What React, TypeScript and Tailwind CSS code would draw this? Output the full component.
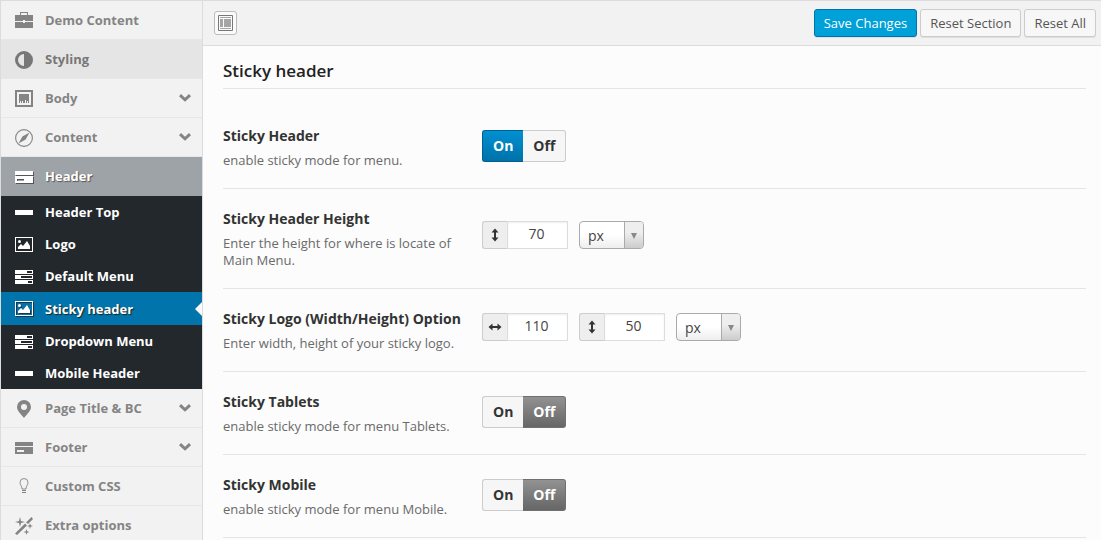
import { useId, useState } from "react";
import type { ReactNode } from "react";

type IconName =
  | "briefcase" | "adjust" | "photo" | "compass" | "card" | "minus"
  | "picture" | "tasks" | "pin" | "bulb" | "magic";

const shapes: Record<IconName, ReactNode> = {
  briefcase: (
    <>
      <path d="M5 3V0h8v3h5v6h-8V8H8v1H0V3zM6 3h6V1H6z" fillRule="evenodd" />
      <path d="M0 10h8v1h2v-1h8v6H0z" />
    </>
  ),
  adjust: <path d="M9 0a9 9 0 1 0 0 18A9 9 0 0 0 9 0zm0 3v12A6 6 0 0 1 9 3z" fillRule="evenodd" />,
  photo: (
    <>
      <path d="M0 0h18v17H0zM2 2v13h14V2z" fillRule="evenodd" />
      <path d="M4 4h10v9h-1v-2h-1v2h-1v-3h-1v3H8v-2H7v2H6v-2H5v2H4z" />
    </>
  ),
  compass: (
    <>
      <circle cx="9" cy="9" r="8.4" fill="none" stroke="currentColor" strokeWidth="1.1" />
      <path d="M14.5 3.5 10.6 10.6 3.5 14.5 7.4 7.4z" />
    </>
  ),
  card: (
    <>
      <path d="M0 3h18v4H0z" />
      <path d="M0 8h18v7H0zM2 11v2h7v-2z" fillRule="evenodd" />
    </>
  ),
  minus: <path d="M0 6h18v5H0z" />,
  picture: (
    <>
      <path d="M0 1h18v15H0zM1 2v13h16V2z" fillRule="evenodd" />
      <circle cx="4.5" cy="5.5" r="1.5" />
      <path d="M3 13v-2l3-3 2 2 4-5 3 5v3z" />
    </>
  ),
  tasks: (
    <path
      d="M0 2h18v4H0zM12 3v2h5V3zM0 7h18v4H0zM6 8v2h11V8zM0 12h18v4H0zM13 13v2h4v-2z"
      fillRule="evenodd"
    />
  ),
  pin: (
    <path
      d="M9 0a7 7 0 0 0-7 7c0 4 4 7 7 11 3-4 7-7 7-11a7 7 0 0 0-7-7zm0 4a3 3 0 1 1 0 6 3 3 0 0 1 0-6z"
      fillRule="evenodd"
    />
  ),
  bulb: (
    <>
      <path d="M7 11C7 8 5 7 5 4.500a4 4 0 0 1 8 0C13 7 11 8 11 11z" fill="none" stroke="currentColor" strokeWidth="0.9" />
      <path d="M7 12h4v1H7zM7 14h4v1H7z" />
    </>
  ),
  magic: (
    <>
      <path d="M0 16.500 10 6.500l2 2L2 18zM11 5.500 16.500 0 18 2l-5 5z" />
      <path d="M5 0 6 4l4 1-4 1-1 4-1-4-4-1 4-1zM15 6l.7 2.300L18 9l-2.300.7L15 12l-.7-2.300L12 9l2.300-.7zM11.500 12l.7 2.300 2.300.7-2.300.7-.7 2.300-.7-2.300L8.500 15l2.300-.7z" />
    </>
  ),
};

function Icon({ name }: { name: IconName }) {
  return (
    <svg viewBox="0 0 19 19" className="h-[19px] w-[19px] shrink-0" fill="currentColor" aria-hidden="true">
      {shapes[name]}
    </svg>
  );
}

function Chevron() {
  return (
    <svg viewBox="0 0 12 8" className="mr-px mb-0.5 ml-auto h-2 w-3" fill="none" stroke="currentColor" strokeWidth="3" aria-hidden="true">
      <path d="M1 1.200 6 5.800 11 1.200" />
    </svg>
  );
}

function NavItem({ icon, label, expandable = false, state = "idle" }: {
  icon: IconName;
  label: string;
  expandable?: boolean;
  state?: "idle" | "hover" | "active";
}) {
  const look = {
    idle: "border-[#e7e7e7] bg-[#f2f2f2] text-[#848484]",
    hover: "border-[#e7e7e7] bg-[#e5e5e5] text-[#777777]",
    active: "border-[#9ea3a8] bg-[#9ea3a8] text-white [text-shadow:1px_1px_1px_#555] [&_svg]:drop-shadow-[1px_1px_0_#555]",
  }[state];
  return (
    <a href="#" className={`flex h-[39px] items-center gap-[11px] border-b pt-0.5 pr-[10px] pl-[14px] ${look}`}>
      <Icon name={icon} />
      <span>{label}</span>
      {expandable && <Chevron />}
    </a>
  );
}

function SubItem({ icon, label, current = false }: { icon: IconName; label: string; current?: boolean }) {
  return (
    <a
      href="#"
      aria-current={current ? "page" : undefined}
      className={`relative flex items-center gap-[11px] pt-0.5 pl-[14px] text-white ${
        current
          ? "h-[33px] bg-[#0074ab] [text-shadow:1px_1px_1px_#222] [&_svg]:drop-shadow-[1px_1px_0_#234]"
          : "h-8"
      }`}
    >
      <Icon name={icon} />
      <span>{label}</span>
      {current && (
        <span className="absolute top-1/2 right-0 -translate-y-1/2 border-y-7 border-r-7 border-y-transparent border-r-[#fcfcfc]" />
      )}
    </a>
  );
}

function Sidebar() {
  return (
    <nav className="w-[203px] shrink-0 border-x border-[#dcdcdc] bg-[#f2f2f2] font-bold">
      <NavItem icon="briefcase" label="Demo Content" />
      <NavItem icon="adjust" label="Styling" state="hover" />
      <NavItem icon="photo" label="Body" expandable />
      <NavItem icon="compass" label="Content" expandable />
      <NavItem icon="card" label="Header" state="active" />
      <div className="bg-[#23282d]">
        <SubItem icon="minus" label="Header Top" />
        <SubItem icon="picture" label="Logo" />
        <SubItem icon="tasks" label="Default Menu" />
        <SubItem icon="picture" label="Sticky header" current />
        <SubItem icon="tasks" label="Dropdown Menu" />
        <SubItem icon="minus" label="Mobile Header" />
      </div>
      <NavItem icon="pin" label="Page Title & BC" expandable />
      <NavItem icon="card" label="Footer" expandable />
      <NavItem icon="bulb" label="Custom CSS" />
      <NavItem icon="magic" label="Extra options" />
    </nav>
  );
}

function Toggle({ label, initial }: { label: string; initial: boolean }) {
  const [on, setOn] = useState(initial);
  const idle = "border-[#cccccc] bg-[#f6f6f6] text-[#333333]";
  return (
    <div role="group" aria-label={label} className="mb-1 flex h-8 text-sm font-bold">
      <button
        type="button"
        aria-pressed={on}
        onClick={() => setOn(true)}
        className={`rounded-l-[3px] border border-r-0 px-[10px] ${
          on ? "border-[#00608f] bg-linear-to-b from-[#0090d3] to-[#0072a8] text-white" : idle
        }`}
      >
        On
      </button>
      <button
        type="button"
        aria-pressed={!on}
        onClick={() => setOn(false)}
        className={`rounded-r-[3px] border border-l-0 px-[10px] ${
          on ? idle : "border-[#707070] bg-linear-to-b from-[#929292] to-[#666666] text-white"
        }`}
      >
        Off
      </button>
    </div>
  );
}

function SizeInput({ label, value, vertical = false }: { label: string; value: string; vertical?: boolean }) {
  const id = useId();
  return (
    <div className="mb-2 flex h-7">
      <label
        htmlFor={id}
        aria-label={label}
        className="flex w-[25px] items-center justify-center rounded-l-[3px] border border-r-0 border-[#cccccc] bg-[#eeeeee] text-[#333333]"
      >
        <svg viewBox="0 0 14 14" className="h-[14px] w-[14px]" fill="currentColor" aria-hidden="true">
          <path
            d={vertical
              ? "M7 .5 10.500 4.500H8v5h2.500L7 13.500 3.500 9.500H6v-5H3.500z"
              : "M.5 7 4.500 3.500V6h5V3.500L13.500 7 9.500 10.500V8h-5v2.500z"}
          />
        </svg>
      </label>
      <input
        id={id}
        type="text"
        defaultValue={value}
        className="w-[61px] border border-[#dddddd] bg-white pr-0.5 pb-0.5 text-center text-sm text-[#444444] shadow-[inset_0_1px_2px_rgba(0,0,0,0.07)] outline-none"
      />
    </div>
  );
}

function UnitSelect({ label }: { label: string }) {
  return (
    <div className="relative mb-2 h-7 w-[65px]">
      <select
        aria-label={label}
        className="h-full w-full appearance-none rounded-[4px] border border-[#aaaaaa] bg-linear-to-t from-[#eeeeee] to-white to-50% pt-0.5 pl-2 text-sm text-[#444444] outline-none"
      >
        <option>px</option>
      </select>
      <span className="pointer-events-none absolute inset-y-px right-px flex w-[19px] items-center justify-center rounded-r-[3px] border-l border-[#aaaaaa] bg-linear-to-t from-[#cccccc] to-[#eeeeee] to-60%">
        <span className="mt-0.5 border-x-3 border-t-6 border-x-transparent border-t-[#888888]" />
      </span>
    </div>
  );
}

function Field({ title, hint, children }: { title: string; hint: string; children: ReactNode }) {
  return (
    <section className="flex items-center border-b border-[#e5e5e5] pt-5 pb-[19px]">
      <div className="w-[259px] shrink-0">
        <h3 className="text-sm leading-5 font-bold text-[#333333]">{title}</h3>
        <p className="mt-1.5 max-w-[240px] text-[13px] leading-[17px] text-[#6a6a6a]">{hint}</p>
      </div>
      <div className="flex gap-[11px]">{children}</div>
    </section>
  );
}

function Toolbar() {
  const plain = "border-[#cccccc] bg-[#f7f7f7] text-[#555555]";
  const base = "h-7 rounded-[3px] border px-[9px] pt-px shadow-[0_1px_0_rgba(0,0,0,0.08)]";
  return (
    <header className="flex h-[45px] items-center border-b border-[#dcdcdc] bg-[#f2f2f2] pr-[5px] pl-[11px]">
      <button
        type="button"
        aria-label="Expand all sections"
        className="flex h-6 w-[23px] items-center justify-center rounded-[3px] border border-[#bbbbbb] bg-[#fafafa]"
      >
        <svg viewBox="0 0 15 16" className="h-4 w-[15px]" aria-hidden="true">
          <path d="M.5.5h14v15H.5z" fill="none" stroke="#777777" />
          <path d="M2 2h11v1H2zM2 4h3v8H2zM6 4h7v8H6zM2 13h11v1H2z" fill="#a5a5a5" />
        </svg>
      </button>
      <div className="ml-auto flex gap-[3px]">
        <button type="button" className={`${base} border-[#0073aa] bg-[#00a0d8] text-white`}>Save Changes</button>
        <button type="button" className={`${base} ${plain}`}>Reset Section</button>
        <button type="button" className={`${base} ${plain}`}>Reset All</button>
      </div>
    </header>
  );
}

export default function App() {
  return (
    <div className="flex h-screen overflow-hidden border-t border-[#dcdcdc] bg-[#fcfcfc] font-['Open_Sans',sans-serif] text-[13px]">
      <Sidebar />
      <div className="min-w-0 flex-1">
        <Toolbar />
        <main className="pr-[15px] pl-5">
          <h2 className="mb-[17px] border-b border-[#e5e5e5] pt-[13px] pb-[5px] text-[17px] leading-6 font-semibold text-[#222222]">
            Sticky header
          </h2>
          <Field title="Sticky Header" hint="enable sticky mode for menu.">
            <Toggle label="Sticky Header" initial={true} />
          </Field>
          <Field title="Sticky Header Height" hint="Enter the height for where is locate of Main Menu.">
            <SizeInput label="Height" value="70" vertical />
            <UnitSelect label="Height unit" />
          </Field>
          <Field title="Sticky Logo (Width/Height) Option" hint="Enter width, height of your sticky logo.">
            <SizeInput label="Logo width" value="110" />
            <SizeInput label="Logo height" value="50" vertical />
            <UnitSelect label="Logo unit" />
          </Field>
          <Field title="Sticky Tablets" hint="enable sticky mode for menu Tablets.">
            <Toggle label="Sticky Tablets" initial={false} />
          </Field>
          <Field title="Sticky Mobile" hint="enable sticky mode for menu Mobile.">
            <Toggle label="Sticky Mobile" initial={false} />
          </Field>
        </main>
      </div>
    </div>
  );
}
